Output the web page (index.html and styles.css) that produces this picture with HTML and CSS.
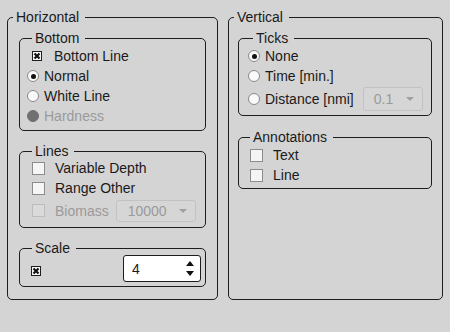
FILE: index.html
```html
<!DOCTYPE html>
<html lang="en">
<head>
  <meta charset="UTF-8">
  <title>Echogram Options</title>
  <link rel="stylesheet" href="styles.css">
</head>
<body>
  <div class="window">
    <!-- Horizontal panel -->
    <fieldset class="group outer horiz">
      <legend>Horizontal</legend>
      <div class="stack">
        <fieldset class="group inner sec-bottom">
          <legend>Bottom</legend>
          <div class="row"><span class="check on"><svg viewBox="0 0 8 8"><path d="M1.5 1.5 L6.5 6.5 M6.5 1.5 L1.5 6.5"/></svg></span>Bottom Line</div>
          <div class="row"><span class="radio on"></span>Normal</div>
          <div class="row"><span class="radio"></span>White Line</div>
          <div class="row off"><span class="radio dim"></span>Hardness</div>
        </fieldset>

        <fieldset class="group inner sec-lines">
          <legend>Lines</legend>
          <div class="row"><span class="check"></span>Variable Depth</div>
          <div class="row"><span class="check"></span>Range Other</div>
          <div class="row tall off">
            <span class="check dim"></span>Biomass
            <div class="select biomass"><span>10000</span><span class="caret"></span></div>
          </div>
        </fieldset>

        <fieldset class="group inner sec-scale">
          <legend>Scale</legend>
          <div class="scale-row">
            <span class="check on"><svg viewBox="0 0 8 8"><path d="M1.5 1.5 L6.5 6.5 M6.5 1.5 L1.5 6.5"/></svg></span>
            <div class="spin">
              <span>4</span>
              <span class="arrows"><span class="up"></span><span class="down"></span></span>
            </div>
          </div>
        </fieldset>
      </div>
    </fieldset>

    <!-- Vertical panel -->
    <fieldset class="group outer vert">
      <legend>Vertical</legend>
      <div class="stack">
        <fieldset class="group inner sec-ticks">
          <legend>Ticks</legend>
          <div class="row"><span class="radio on"></span>None</div>
          <div class="row"><span class="radio"></span>Time [min.]</div>
          <div class="row tall">
            <span class="radio"></span>Distance [nmi]
            <div class="select distance"><span>0.1</span><span class="caret"></span></div>
          </div>
        </fieldset>

        <fieldset class="group inner sec-notes">
          <legend>Annotations</legend>
          <div class="row"><span class="check"></span>Text</div>
          <div class="row"><span class="check"></span>Line</div>
        </fieldset>
      </div>
    </fieldset>
  </div>
</body>
</html>
```

FILE: styles.css
```css
body {
  margin: 0;
  background: #d4d4d4;
  font-family: "Liberation Sans", Arial, sans-serif;
  font-size: 14px;
  color: #1a1a1a;
}
.window {
  display: flex;
  gap: 10px;
  padding: 9px 0 0 7px;
  height: 332px;
  width: 448px;
  box-sizing: border-box;
}

/* group boxes */
.group {
  margin: 0;
  padding: 0;
  border: 1px solid #1e1e1e;
  border-radius: 5px;
  min-width: 0;
}
.group legend {
  margin-left: 5px;
  padding: 0 6px 0 3px;
  line-height: 16px;
}
.outer {
  box-sizing: border-box;
  height: 291px;
}
.horiz {
  width: 211px;
}
.horiz .stack {
  padding: 6px 11px 0 11px;
}
.vert {
  width: 215px;
}
.vert .stack {
  padding: 6px 10px 0 9px;
}
.inner legend {
  line-height: 14px;
}
.inner + .inner {
  margin-top: 13px;
}
.sec-bottom {
  padding: 1px 0 4px 7px;
}
.sec-lines {
  padding: 0 0 4px 7px;
}
.sec-scale {
  padding: 0 4px 4px 7px;
}
.sec-ticks {
  padding: 1px 0 4px 9px;
}
.sec-notes {
  margin-top: 14px !important;
  padding: 1px 0 3px 6px;
}

/* rows */
.row {
  display: flex;
  align-items: center;
  height: 20px;
}
.row.tall {
  height: 25px;
}
.row.off {
  color: #9a9a9a;
}

.check {
  box-sizing: border-box;
  width: 13px;
  height: 13px;
  margin: 0 10px 0 5px;
  border: 1px solid #8c8c8c;
  background: #f5f5f5;
  display: flex;
  align-items: center;
  justify-content: center;
}
.check.on {
  width: 10px;
  height: 10px;
  margin-right: 12px;
  border-color: #1e1e1e;
  background: #f7f7f7;
}
.check svg {
  width: 8px;
  height: 8px;
  stroke: #111;
  stroke-width: 2.2;
  fill: none;
}
.check.dim {
  border-color: #bdbdbd;
  background: #dadada;
}

.radio {
  box-sizing: border-box;
  width: 12px;
  height: 12px;
  margin-right: 5px;
  border: 1px solid #8a8a8a;
  border-radius: 50%;
  background: #fafafa;
  display: flex;
  align-items: center;
  justify-content: center;
}
.radio.on::after {
  content: "";
  width: 5px;
  height: 5px;
  border-radius: 50%;
  background: #111;
}
.radio.dim {
  border-color: #707070;
  background: #707070;
}

.select {
  box-sizing: border-box;
  height: 22px;
  display: flex;
  align-items: center;
  justify-content: space-between;
  border: 1px solid #c2c2c2;
  border-radius: 3px;
  background: #d6d6d6;
  color: #9a9a9a;
  padding: 0 8px 0 11px;
}
.select.biomass {
  width: 80px;
  margin-left: 7px;
}
.select.distance {
  width: 60px;
  height: 24px;
  margin-left: 9px;
  padding-left: 10px;
}
.caret {
  width: 0;
  height: 0;
  border-left: 4px solid transparent;
  border-right: 4px solid transparent;
  border-top: 4px solid #a0a0a0;
}

.scale-row {
  display: flex;
  align-items: center;
  justify-content: space-between;
  height: 27px;
}
.scale-row .check.on {
  margin-left: 4px;
  margin-top: 4px;
}
.spin {
  box-sizing: border-box;
  width: 78px;
  height: 27px;
  display: flex;
  align-items: center;
  justify-content: space-between;
  border: 1px solid #1e1e1e;
  border-radius: 3px;
  background: #fff;
  padding: 0 6px 0 8px;
}
.arrows {
  display: flex;
  flex-direction: column;
  gap: 5px;
}
.up,
.down {
  width: 0;
  height: 0;
  border-left: 4px solid transparent;
  border-right: 4px solid transparent;
}
.up {
  border-bottom: 5px solid #111;
}
.down {
  border-top: 5px solid #111;
}
```
